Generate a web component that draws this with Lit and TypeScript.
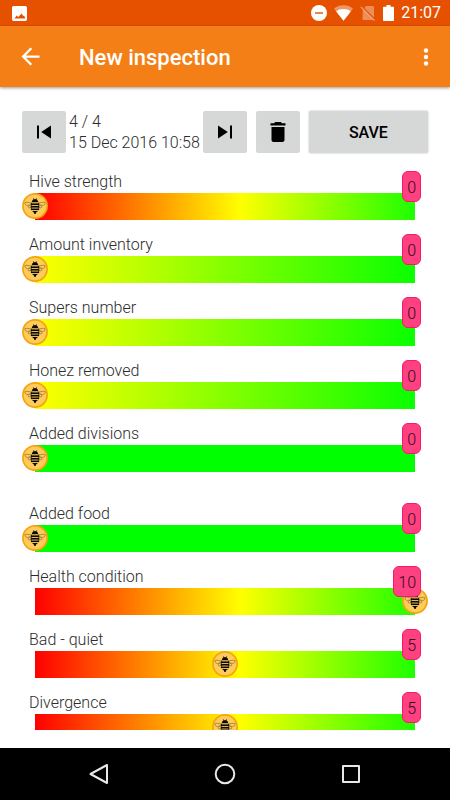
import { LitElement, html, css, svg } from "lit";
import { customElement, property, state } from "lit/decorators.js";

type Scale = "full" | "half" | "flat";

interface Rating {
  id: string;
  label: string;
  value: number;
  scale: Scale;
  endsGroup?: boolean;
}

const RATINGS: Rating[] = [
  { id: "hive", label: "Hive strength", value: 0, scale: "full" },
  { id: "inventory", label: "Amount inventory", value: 0, scale: "half" },
  { id: "supers", label: "Supers number", value: 0, scale: "half" },
  { id: "honey", label: "Honez removed", value: 0, scale: "half" },
  { id: "divisions", label: "Added divisions", value: 0, scale: "flat", endsGroup: true },
  { id: "food", label: "Added food", value: 0, scale: "flat" },
  { id: "health", label: "Health condition", value: 10, scale: "full" },
  { id: "quiet", label: "Bad - quiet", value: 5, scale: "full" },
  { id: "divergence", label: "Divergence", value: 5, scale: "full" },
];

const beeShape = svg`
  <circle cx="13" cy="13" r="12.1" fill="#ffcc5c" stroke="#f5a30f" stroke-width="1.7"/>
  <g fill="none" stroke="#8a6d2e" stroke-width=".7">
    <path d="M10 10.600C7 9.200 4.400 9 3 9.600c-.4 1.700.8 2.800 2.400 2.800 1.600 0 3-.4 4.600-1"/>
    <path d="M9.600 11.800C7.600 11.800 6 12.800 6 14.200c.6 1 2.600.9 3.800-.8"/>
    <path d="M16 10.600c3-1.400 5.600-1.600 7-1 .4 1.700-.8 2.800-2.400 2.800-1.600 0-3-.4-4.600-1"/>
    <path d="M16.400 11.800c2 0 3.600 1 3.600 2.400-.6 1-2.600.9-3.800-.8"/>
  </g>
  <g fill="#0c0a06">
    <path d="M9.800 9.200c0-1.500.9-2.400 1.800-2.700L10.800 5.400h.9l.8.800h1l.8-.8h.9l-.8 1.100c.9.300 1.800 1.200 1.800 2.700z"/>
    <rect x="9" y="10.400" width="8" height="1.700"/>
    <rect x="8.800" y="13" width="8.400" height="1.600"/>
    <rect x="9" y="15.500" width="8" height="1.600"/>
    <path d="M10 18h6l-1.900 1.500-.5 1.500h-1.200l-.5-1.500z"/>
  </g>
  <path d="M9.300 9.500v7.500M16.700 9.500v7.500" stroke="#0c0a06" stroke-width=".6"/>`;

@customElement("rating-slider")
export class RatingSlider extends LitElement {
  @property() label = "";
  @property() scale: Scale = "full";
  @property({ type: Number }) value = 0;

  static styles = css`
    :host {
      display: block;
      position: relative;
    }
    .label {
      display: block;
      padding-left: 7px;
      font-size: 16px;
      line-height: 22px;
    }
    .control {
      position: relative;
      height: 27px;
    }
    .range {
      -webkit-appearance: none;
      appearance: none;
      display: block;
      width: 100%;
      height: 27px;
      margin: 0;
      background-repeat: no-repeat;
      background-position: center;
      background-size: calc(100% - 26px) 100%;
    }
    .range::-webkit-slider-thumb {
      -webkit-appearance: none;
      width: 26px;
      height: 26px;
      border-radius: 50%;
      background: transparent;
    }
    .full {
      background-image: linear-gradient(to right, #f00, #ff0 54%, #1eff00);
    }
    .half {
      background-image: linear-gradient(to right, #ff0, #0aff00);
    }
    .flat {
      background-image: linear-gradient(#0f0, #0f0);
    }
    .bee {
      position: absolute;
      top: 0;
      width: 26px;
      height: 26px;
      pointer-events: none;
    }
    .badge {
      position: absolute;
      top: 0;
      right: 7px;
      box-sizing: border-box;
      height: 31px;
      padding: 0 4px;
      border: 1px solid #f8186c;
      border-radius: 6px;
      background: #ff4081;
      color: #2e0d19;
      font-size: 16px;
      line-height: 31px;
    }
  `;

  private onInput(e: Event) {
    this.value = Number((e.target as HTMLInputElement).value);
  }

  render() {
    return html`
      <label class="label" for="range">${this.label}</label>
      <div class="control">
        <input id="range" class="range ${this.scale}" type="range" min="0" max="10"
          .value=${String(this.value)} @input=${this.onInput} />
        <svg class="bee" viewBox="0 0 26 26" aria-hidden="true"
          style="left: calc((100% - 26px) * ${this.value / 10})">${beeShape}</svg>
      </div>
      <output class="badge" for="range">${this.value}</output>
    `;
  }
}

@customElement("app-root")
export class AppRoot extends LitElement {
  @state() private ratings = RATINGS;

  static styles = css`
    :host {
      display: flex;
      flex-direction: column;
      height: 100vh;
      background: #fff;
      color: #2c2c2c;
      font-family: Roboto, "Noto Sans", sans-serif;
      font-weight: 300;
    }
    svg {
      display: block;
      flex: none;
    }
    button {
      display: flex;
      align-items: center;
      justify-content: center;
      margin: 0;
      padding: 0;
      border: 0;
      background: none;
      color: inherit;
      font-family: inherit;
    }
    .status {
      display: flex;
      align-items: center;
      flex: none;
      height: 26px;
      padding: 0 9px 0 12px;
      background: #e65100;
      color: #fff;
    }
    .signals {
      display: flex;
      align-items: center;
      gap: 7px;
      margin-left: auto;
    }
    .clock {
      font-size: 16px;
      line-height: 28px;
      font-weight: 400;
    }
    .toolbar {
      display: flex;
      align-items: center;
      flex: none;
      height: 61px;
      padding: 0 12px 0 17px;
      background: #f57f17;
      color: #fff;
      box-shadow: 0 1px 3px rgba(0, 0, 0, 0.4);
    }
    .title {
      flex: 1;
      margin: 0;
      padding: 2px 0 0 35px;
      font-size: 22px;
      line-height: 28px;
      font-weight: 500;
    }
    .body {
      display: flex;
      flex-direction: column;
      flex: 1;
      min-height: 0;
      padding: 24px 22px 18px;
    }
    .actions {
      display: flex;
      align-items: center;
      gap: 9px;
      flex: none;
      padding-bottom: 17px;
    }
    .pager {
      display: flex;
      align-items: center;
      gap: 3px;
    }
    .stamp {
      font-size: 16px;
      line-height: 21px;
      white-space: nowrap;
    }
    .stamp div,
    .stamp time {
      display: block;
    }
    .actions button {
      width: 44px;
      height: 42px;
      border-radius: 2px;
      background: #d6d7d7;
      color: #000;
    }
    .actions .save {
      flex: 1;
      font-size: 16px;
      font-weight: 500;
      box-shadow: 0 0 2px rgba(0, 0, 0, 0.3);
    }
    .ratings {
      display: flex;
      flex-direction: column;
      gap: 14px;
      flex: 1;
      min-height: 0;
      margin: 0 -22px;
      padding: 1px 22px 0;
      overflow-y: auto;
      scrollbar-width: none;
    }
    .ratings > * {
      flex: none;
    }
    .group-end {
      margin-bottom: 17px;
    }
    .nav {
      display: flex;
      justify-content: center;
      flex: none;
      height: 52px;
      background: #000;
      color: #e8e8e8;
    }
    .nav button {
      flex: 0 0 28%;
    }
  `;

  render() {
    return html`
      <div class="status">
        <svg width="15" height="15" viewBox="3 3 18 18" fill="#fff" aria-hidden="true">
          <path d="M21 19V5c0-1.100-.9-2-2-2H5c-1.100 0-2 .9-2 2v14c0 1.100.9 2 2 2h14c1.100 0 2-.9 2-2zM6 18l2.500-3.500 2 1.800L14.500 12l2 3 1-.5L19 18z"/>
        </svg>
        <div class="signals">
          <svg width="16" height="16" viewBox="0 0 16 16" aria-hidden="true">
            <circle cx="8" cy="8" r="8" fill="#fff"/>
            <rect x="4" y="7.300" width="8" height="1.400" fill="#e65100"/>
          </svg>
          <svg width="19" height="16" viewBox="0 0 19 16" fill="#fff" aria-hidden="true">
            <path opacity=".4" d="M9.500 15.700 0 3.600C2.400 1.500 5.800.3 9.500.3s7.100 1.200 9.500 3.300z"/>
            <path d="M9.500 15.700 2.200 6.400c2-1.600 4.500-2.400 7.300-2.400s5.300.8 7.300 2.400z"/>
          </svg>
          <svg width="16" height="16" viewBox="0 0 16 16" aria-hidden="true">
            <path opacity=".35" fill="#fff" d="M6 1h6.500c.8 0 1.500.7 1.500 1.500v10L4.300 2.900zM2.800 4.200 13.500 15H4c-.8 0-1.500-.7-1.500-1.500z"/>
            <path opacity=".45" stroke="#fff" stroke-width="1.200" d="M.8 1.800 14.600 15.600"/>
          </svg>
          <svg width="11" height="16" viewBox="1 0 11 16" fill="#fff" aria-hidden="true">
            <path d="M4.500 0h4v1.700H11c.6 0 1 .4 1 1V15c0 .6-.4 1-1 1H2c-.6 0-1-.4-1-1V2.700c0-.6.4-1 1-1h2.500z"/>
          </svg>
          <span class="clock">21:07</span>
        </div>
      </div>

      <header class="toolbar">
        <button aria-label="Back">
          <svg width="27" height="27" viewBox="0 0 24 24" fill="currentColor">
            <path d="M20 11H7.830l5.590-5.590L12 4l-8 8 8 8 1.410-1.410L7.830 13H20v-2z"/>
          </svg>
        </button>
        <h1 class="title">New inspection</h1>
        <button aria-label="More options">
          <svg width="24" height="24" viewBox="0 0 24 24" fill="currentColor">
            <circle cx="12" cy="5.500" r="2.200"/>
            <circle cx="12" cy="12" r="2.200"/>
            <circle cx="12" cy="18.500" r="2.200"/>
          </svg>
        </button>
      </header>

      <main class="body">
        <div class="actions">
          <div class="pager">
            <button aria-label="Previous inspection">
              <svg width="14" height="14" viewBox="0 0 14 14"><path d="M0 .5h2v13H0zM4.200 7 14 .5v13z"/></svg>
            </button>
            <div class="stamp">
              <div>4 / 4</div>
              <time datetime="2016-12-15T10:58">15 Dec 2016 10:58</time>
            </div>
            <button aria-label="Next inspection">
              <svg width="14" height="14" viewBox="0 0 14 14"><path d="M12 .5h2v13h-2zM9.800 7 0 .5v13z"/></svg>
            </button>
          </div>
          <button aria-label="Delete inspection">
            <svg width="16" height="20" viewBox="0 0 16 20">
              <path d="M.5 1.200H4L5.200 0h5.600L12 1.200h3.500v2.200H.5zM1.500 5h13v13c0 1.100-.9 2-2 2h-9c-1.100 0-2-.9-2-2z"/>
            </svg>
          </button>
          <button class="save">SAVE</button>
        </div>
        <div class="ratings">
          ${this.ratings.map(
            (r) => html`<rating-slider class=${r.endsGroup ? "group-end" : ""}
              label=${r.label} scale=${r.scale} value=${r.value}></rating-slider>`
          )}
        </div>
      </main>

      <nav class="nav">
        <button aria-label="Navigate back">
          <svg width="20" height="20" viewBox="0 0 20 20" fill="none" stroke="currentColor" stroke-width="2" stroke-linejoin="round">
            <path d="M1.500 10 18 1v18z"/>
          </svg>
        </button>
        <button aria-label="Home">
          <svg width="22" height="22" viewBox="0 0 22 22" fill="none" stroke="currentColor" stroke-width="2">
            <circle cx="11" cy="11" r="9.300"/>
          </svg>
        </button>
        <button aria-label="Recent apps">
          <svg width="18" height="18" viewBox="0 0 18 18" fill="none" stroke="currentColor" stroke-width="2" stroke-linejoin="round">
            <rect x="1" y="1" width="16" height="16"/>
          </svg>
        </button>
      </nav>
    `;
  }
}
